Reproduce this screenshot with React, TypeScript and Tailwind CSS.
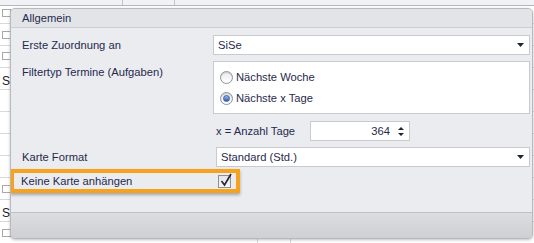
import React from "react";

function ComboArrow() {
  return (
    <svg width="7" height="4" viewBox="0 0 7 4" className="block">
      <path d="M0 0 H7 L3.5 4 Z" fill="#1f2533" />
    </svg>
  );
}

function Radio({ checked }: { checked?: boolean }) {
  return (
    <span className="relative w-[13px] h-[13px] rounded-full border border-[#8f9298] bg-gradient-to-b from-[#e9eaec] to-[#ffffff] flex items-center justify-center shadow-[inset_0_1px_1px_rgba(0,0,0,0.15)]">
      {checked && (
        <span className="w-[7px] h-[7px] rounded-full bg-gradient-to-b from-[#9fb8e6] to-[#2f5fb8] border border-[#3d5f9e]" />
      )}
    </span>
  );
}

function BgCheck() {
  return <span className="block w-[9px] h-[8px] border border-[#a8a8a8] bg-white ml-[2px]" />;
}

export default function App() {
  const rows: { h: number; pt: number; c: string }[] = [
    { h: 18, pt: 3, c: "cb" },
    { h: 22, pt: 7, c: "cb" },
    { h: 22, pt: 6, c: "cb" },
    { h: 22, pt: 5, c: "St" },
    { h: 22, pt: 7, c: "" },
    { h: 22, pt: 7, c: "" },
    { h: 22, pt: 7, c: "" },
    { h: 22, pt: 7, c: "" },
    { h: 22, pt: 7, c: "cb" },
    { h: 22, pt: 5, c: "St" },
    { h: 22, pt: 7, c: "cb" },
  ];
  return (
    <div className="relative w-[534px] h-[243px] overflow-hidden bg-white font-['Liberation_Sans',Arial,sans-serif] text-[11.2px] text-[#1f2a4c]">
      {/* background tab strip */}
      <div className="flex h-[6px] bg-[#f1f2f6] border-b border-[#b4b5b9]">
        <div className="w-[123px] border-r border-[#c3c4c8]" />
        <div className="w-[52px] border-r border-[#c3c4c8]" />
      </div>
      {/* background grid */}
      <div className="flex flex-col">
        {rows.map((r, i) => (
          <div
            key={i}
            className="flex border-b border-[#d9d9dc]"
            style={{ height: r.h, paddingTop: r.pt }}
          >
            <div className="w-[258px] border-r border-[#d9d9dc] h-full">
              {r.c === "cb" && <BgCheck />}
              {r.c === "St" && <span className="ml-[2px] text-[12px] leading-[12px] text-[#222]">St</span>}
            </div>
            <div className="w-[33px] border-r border-[#d9d9dc] h-full" />
          </div>
        ))}
      </div>

      {/* popup panel */}
      <div className="absolute left-[10px] top-[8px] w-[523px] h-[231px] rounded-[5px] border border-[#b8b9bd] bg-[#ebecf0] shadow-[0_1px_3px_rgba(0,0,0,0.25)] flex flex-col overflow-hidden">
        <div className="h-[19px] shrink-0 bg-[#e3e4e8] border-b border-[#cdced2] pl-[11px] flex items-center">
          Allgemein
        </div>
        <div className="flex-1 flex flex-col pt-[7px]">
          {/* row 1 */}
          <div className="flex items-center h-[20px]">
            <div className="w-[202px] pl-[11px]">Erste Zuordnung an</div>
            <div className="w-[317px] h-[20px] bg-white border border-[#c9cacd] flex items-center pl-[4px] pr-[5px]">
              <span className="flex-1">SiSe</span>
              <ComboArrow />
            </div>
          </div>
          {/* row 2 */}
          <div className="flex mt-[6px] h-[53px]">
            <div className="w-[202px] pl-[11px] pt-[3px]">Filtertyp Termine (Aufgaben)</div>
            <div className="w-[317px] h-[53px] bg-white border border-[#c9cacd] flex flex-col pl-[6px] pt-[9px] gap-[8px]">
              <div className="flex items-center gap-[3px] h-[13px]">
                <Radio />
                <span>Nächste Woche</span>
              </div>
              <div className="flex items-center gap-[3px] h-[13px]">
                <Radio checked />
                <span>Nächste x Tage</span>
              </div>
            </div>
          </div>
          {/* row 3 */}
          <div className="flex items-center mt-[7px] h-[20px]">
            <div className="w-[205px]" />
            <div className="w-[94px]">x = Anzahl Tage</div>
            <div className="w-[100px] h-[20px] bg-white border border-[#c9cacd] flex items-center justify-end pr-[5px]">
              <span className="mr-[8px]">364</span>
              <svg width="6" height="11" viewBox="0 0 6 11" className="block">
                <path d="M0 4 H6 L3 1 Z" fill="#1f2533" />
                <path d="M0 7 H6 L3 10 Z" fill="#1f2533" />
              </svg>
            </div>
          </div>
          {/* row 4 */}
          <div className="flex items-center mt-[6px] h-[20px]">
            <div className="w-[205px] pl-[11px]">Karte Format</div>
            <div className="w-[314px] h-[20px] bg-white border border-[#c9cacd] flex items-center pl-[4px] pr-[5px]">
              <span className="flex-1">Standard (Std.)</span>
              <ComboArrow />
            </div>
          </div>
          {/* row 5 */}
          <div className="flex mt-[2px]">
            <div className="w-[230px] h-[24px] border-[4px] border-[#f7a21e] shadow-[0_2px_3px_rgba(0,0,0,0.3)] flex items-center pl-[7px] -ml-[1px]">
              <span className="flex-1">Keine Karte anhängen</span>
              <span className="relative w-[13px] h-[13px] border border-[#8d8f94] bg-gradient-to-b from-[#e4e5e8] to-[#f6f6f7] mr-[5px]">
                <svg width="14" height="15" viewBox="0 0 14 15" className="absolute -top-[3px] left-0">
                  <path d="M2.5 8 L5.5 12 L12 1" stroke="#222633" strokeWidth="1.6" fill="none" />
                </svg>
              </span>
            </div>
          </div>
        </div>
        <div className="h-[26px] shrink-0 border-t border-[#bfc0c4] bg-gradient-to-b from-[#dcdde1] to-[#cfd0d4]" />
      </div>
    </div>
  );
}
